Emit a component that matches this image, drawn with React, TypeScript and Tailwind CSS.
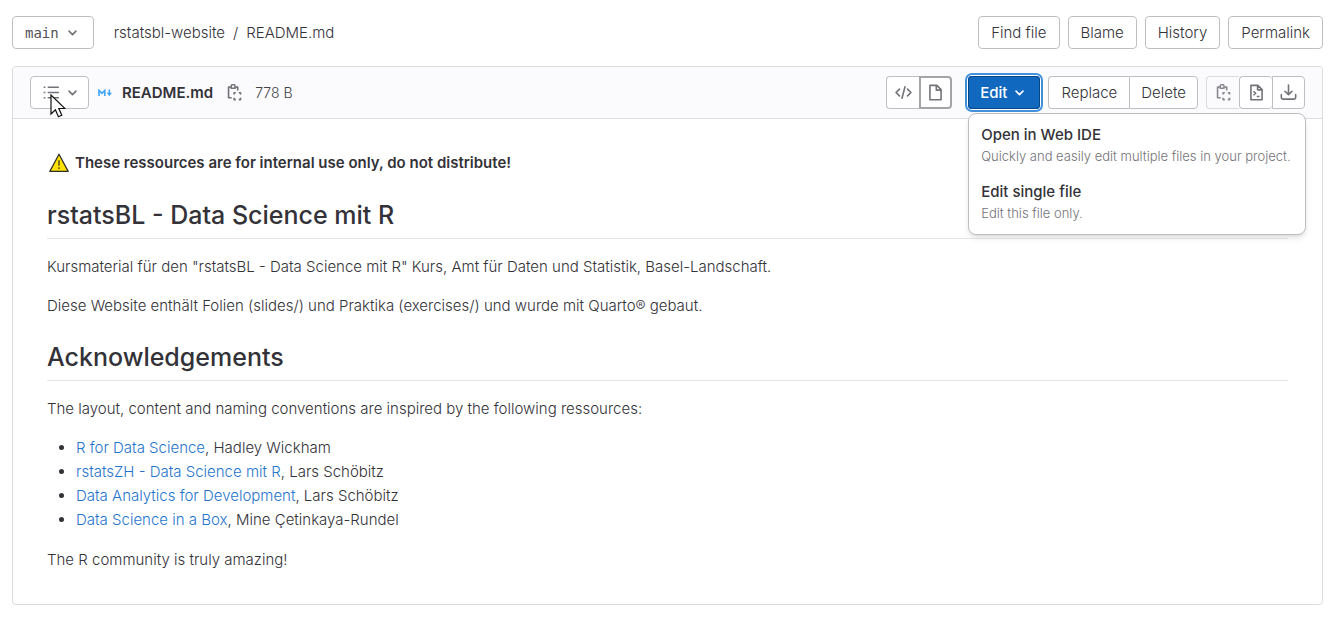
import type { ReactNode } from "react";

const outline =
  "h-[33px] rounded-sm border border-[#bfbfc3] bg-white text-[15px] leading-6 font-light text-[#333238]";

function Icon({ children, className = "text-[#737278]" }: { children: ReactNode; className?: string }) {
  return (
    <svg
      viewBox="0 0 16 16"
      className={`size-[17px] shrink-0 ${className}`}
      fill="none"
      stroke="currentColor"
      strokeWidth="1.5"
      aria-hidden="true"
    >
      {children}
    </svg>
  );
}

function Chevron({ className }: { className?: string }) {
  return (
    <Icon className={className}>
      <path d="M4.75 6.75 8 10l3.25-3.25" strokeLinecap="round" strokeLinejoin="round" />
    </Icon>
  );
}

function CopyIcon({ className }: { className?: string }) {
  return (
    <Icon className={className}>
      <path d="M4.5 2.9H2.4v10H5.4M9 2.9h2v3.2" strokeLinejoin="round" />
      <path d="M4.9 4V2.3a1.8 1.8 0 0 1 3.6 0V4z" strokeLinejoin="round" />
      <path d="M7.6 9.9V8.2h1.7M12 8.2h1.7v1.7M13.7 13v1.7H12M9.3 14.7H7.6V13" strokeLinejoin="round" />
    </Icon>
  );
}

function ListIcon() {
  return (
    <Icon>
      <path d="M5 3h9.4M5 8h9.4M5 13h9.4" strokeLinecap="round" />
      <path d="M.6 3h1.6M.6 8h1.6M.6 13h1.6" />
    </Icon>
  );
}

function MarkdownIcon() {
  return (
    <svg viewBox="0 0 14 8" className="h-2 w-[14px] shrink-0 text-[#42a5f5]" fill="none" stroke="currentColor" aria-hidden="true">
      <path d="M1 7V1.4l2.9 3 2.9-3V7" strokeWidth="1.6" />
      <path d="M11.3.5v4" strokeWidth="1.6" />
      <path d="M8.6 3.8h5.4L11.3 7.2z" fill="currentColor" stroke="none" />
    </svg>
  );
}

function WarningSign() {
  return (
    <svg viewBox="0 0 20 20" className="ml-[2px] h-5 w-5 shrink-0" role="img" aria-label="warning">
      <path d="M10 1.2 19.2 18.4H.8z" fill="#fde100" stroke="#2b2b2b" strokeWidth="1.2" strokeLinejoin="round" />
      <path d="M10 7.2v5.6M10 14.3v1.8" stroke="#4a4420" strokeWidth="1.4" />
    </svg>
  );
}

function Pointer() {
  return (
    <svg viewBox="0 0 16 24" className="pointer-events-none absolute left-5 top-[18px] z-10 h-6 w-4" aria-hidden="true">
      <path d="M1 1v19l4.4-4.2 3 7 3.4-1.5-3-6.8H15z" fill="#fff" stroke="#111" strokeWidth="1.2" />
    </svg>
  );
}

const pageActions = ["Find file", "Blame", "History", "Permalink"];

const resources = [
  { title: "R for Data Science", author: "Hadley Wickham" },
  { title: "rstatsZH - Data Science mit R", author: "Lars Schöbitz" },
  { title: "Data Analytics for Development", author: "Lars Schöbitz" },
  { title: "Data Science in a Box", author: "Mine Çetinkaya-Rundel" },
];

const editOptions = [
  { title: "Open in Web IDE", hint: "Quickly and easily edit multiple files in your project." },
  { title: "Edit single file", hint: "Edit this file only." },
];

function EditMenu() {
  return (
    <div className="relative mr-2">
      <button
        type="button"
        aria-expanded="true"
        className="flex h-[33px] items-center gap-1 rounded-sm bg-[#1068bf] px-3 text-[15px] leading-6 font-medium text-white inset-ring inset-ring-[#064787] ring-2 ring-[#428fdc] ring-offset-1"
      >
        Edit
        <Chevron className="text-white" />
      </button>
      <ul className="absolute left-0 top-[37px] z-10 flex w-[338px] flex-col gap-[15px] rounded-lg border border-[#bfbfc3] bg-white pt-[9px] pb-3 shadow-md">
        {editOptions.map((o) => (
          <li key={o.title}>
            <button type="button" className="flex w-full flex-col items-start px-3 text-left">
              <span className="text-[15px] leading-6 font-medium text-[#333238]">{o.title}</span>
              <span className="text-[13px] leading-[18px] font-light whitespace-nowrap text-[#737278]">{o.hint}</span>
            </button>
          </li>
        ))}
      </ul>
    </div>
  );
}

function FileHeader() {
  return (
    <header className="flex items-center rounded-t-sm border-b border-[#dcdcde] bg-[#fbfafd] px-[17px] py-[9px]">
      <div className="relative">
        <button type="button" aria-label="Table of contents" className={`${outline} flex items-center gap-1 pr-[7px] pl-3`}>
          <ListIcon />
          <Chevron />
        </button>
        <Pointer />
      </div>
      <div className="ml-[9px] flex items-center gap-[10px]">
        <MarkdownIcon />
        <strong className="text-[15px] leading-6 font-semibold text-[#333238]">README.md</strong>
      </div>
      <button type="button" aria-label="Copy file path" className="ml-[13px]">
        <CopyIcon />
      </button>
      <span className="ml-3 text-[14px] leading-6 font-light text-[#434248]">778 B</span>

      <div className="ml-auto flex items-center">
        <div className="mr-4 flex">
          <button type="button" aria-label="Display source" className={`${outline} flex w-[33px] items-center justify-center rounded-r-none border-r-0`}>
            <Icon>
              <path d="m4.2 4.8-3.2 3.2 3.2 3.2M11.8 4.8l3.2 3.2-3.2 3.2M9.4 2.6 6.6 13.4" strokeLinecap="round" strokeLinejoin="round" />
            </Icon>
          </button>
          <button type="button" aria-label="Display rendered file" className="flex h-[33px] w-[33px] items-center justify-center rounded-r-sm border-2 border-[#a4a3a8] bg-white">
            <Icon>
              <path d="M2.75 1.25h6.5l4 4v9.5H2.75zM8.75 1.25v4.5h4.5" strokeLinejoin="round" />
            </Icon>
          </button>
        </div>
        <EditMenu />
        <div className="mr-2 flex">
          <button type="button" className={`${outline} rounded-r-none border-r-0 px-3`}>Replace</button>
          <button type="button" className={`${outline} rounded-l-none px-[11px]`}>Delete</button>
        </div>
        <div className="flex">
          <button type="button" aria-label="Copy file contents" className="flex h-[33px] w-[33px] items-center justify-center rounded-l-sm border border-r-0 border-[#dcdcde] bg-[#fbfafd]">
            <CopyIcon className="text-[#89888d]" />
          </button>
          <button type="button" aria-label="Open raw" className={`${outline} flex w-[33px] items-center justify-center rounded-none border-r-0`}>
            <Icon>
              <path d="M2.75 1.25h6.5l4 4v9.5H2.75zM9 1.5v4h4" strokeLinejoin="round" />
              <path d="m5.2 6.8 2 1.9-2 1.9M8.2 11.7h2.6" strokeLinejoin="round" />
            </Icon>
          </button>
          <button type="button" aria-label="Download" className={`${outline} flex w-[33px] items-center justify-center rounded-l-none`}>
            <Icon>
              <path d="M8 1v8.8M4.7 6.8 8 10l3.3-3.2M1.25 10v2.5a1.75 1.75 0 0 0 1.75 1.75h10a1.75 1.75 0 0 0 1.75-1.75V10" strokeLinecap="round" strokeLinejoin="round" />
            </Icon>
          </button>
        </div>
      </div>
    </header>
  );
}

export default function App() {
  return (
    <main className="bg-white pt-4 pr-[17px] pb-[22px] pl-3 font-['Inter',sans-serif] text-[15px] leading-6 font-light text-[#333238]">
      <div className="flex items-center">
        <button type="button" className="flex h-[33px] items-center gap-[5px] rounded-sm border border-[#bfbfc3] bg-white px-3 font-['DejaVu_Sans_Mono',monospace] text-[14px] leading-6 text-[#535158]">
          main
          <Chevron />
        </button>
        <nav aria-label="Breadcrumb" className="ml-5 flex gap-2">
          <a href="#root">rstatsbl-website</a>
          <span>/</span>
          <a href="#readme">README.md</a>
        </nav>
        <div className="ml-auto flex gap-2">
          {pageActions.map((a) => (
            <button key={a} type="button" className={`${outline} px-3`}>{a}</button>
          ))}
        </div>
      </div>

      <section className="mt-[17px] rounded-sm border border-[#dcdcde]">
        <FileHeader />
        <article className="px-[34px] py-8">
          <p className="flex items-center gap-[6px] font-semibold">
            <WarningSign />
            These ressources are for internal use only, do not distribute!
          </p>
          <h1 className="mt-[23px] border-b border-[#e5e5e7] pb-[6px] text-[25px] leading-[34px] font-medium">
            rstatsBL - Data Science mit R
          </h1>
          <p className="mt-4">
            Kursmaterial für den "rstatsBL - Data Science mit R" Kurs, Amt für Daten und Statistik, Basel-Landschaft.
          </p>
          <p className="mt-[15px]">
            Diese Website enthält Folien (slides/) und Praktika (exercises/) und wurde mit Quarto® gebaut.
          </p>
          <h2 className="mt-[22px] border-b border-[#e5e5e7] pb-[6px] text-[25px] leading-[34px] font-medium">
            Acknowledgements
          </h2>
          <p className="mt-4">The layout, content and naming conventions are inspired by the following ressources:</p>
          <ul className="mt-[15px] list-disc pl-[29px]">
            {resources.map((r) => (
              <li key={r.title}>
                <a href="#resources" className="text-[#1f75cb]">{r.title}</a>, {r.author}
              </li>
            ))}
          </ul>
          <p className="mt-4">The R community is truly amazing!</p>
        </article>
      </section>
    </main>
  );
}
